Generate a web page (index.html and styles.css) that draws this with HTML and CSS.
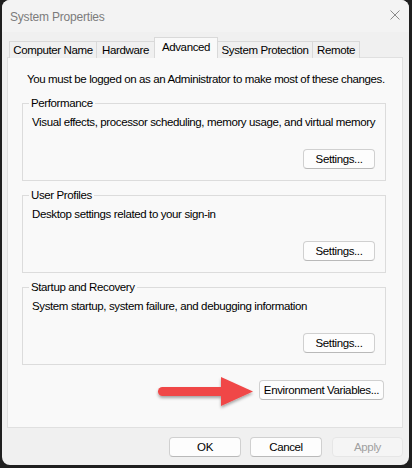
FILE: index.html
```html
<!DOCTYPE html>
<html lang="en">
<head>
  <meta charset="UTF-8">
  <meta name="viewport" content="width=device-width, initial-scale=1.0">
  <title>System Properties</title>
  <link rel="stylesheet" href="styles.css">
</head>
<body>
  <div class="window">
    <div class="titlebar">
      <span class="title">System Properties</span>
      <svg class="close" width="10" height="10" viewBox="0 0 10 10">
        <path d="M0.5 0.5 L9.5 9.5 M9.5 0.5 L0.5 9.5" stroke="#8a8a8a" stroke-width="1" fill="none"/>
      </svg>
    </div>

    <div class="content">
      <div class="tabs">
        <div class="tab tab-name">Computer Name</div>
        <div class="tab tab-hw">Hardware</div>
        <div class="tab tab-adv active">Advanced</div>
        <div class="tab tab-prot">System Protection</div>
        <div class="tab tab-remote">Remote</div>
      </div>

      <div class="panel">
        <p class="note">You must be logged on as an Administrator to make most of these changes.</p>

        <fieldset class="group">
          <legend>Performance</legend>
          <p>Visual effects, processor scheduling, memory usage, and virtual memory</p>
          <div class="group-actions"><button class="btn">Settings...</button></div>
        </fieldset>

        <fieldset class="group">
          <legend>User Profiles</legend>
          <p>Desktop settings related to your sign-in</p>
          <div class="group-actions"><button class="btn">Settings...</button></div>
        </fieldset>

        <fieldset class="group">
          <legend>Startup and Recovery</legend>
          <p>System startup, system failure, and debugging information</p>
          <div class="group-actions"><button class="btn">Settings...</button></div>
        </fieldset>

        <div class="env-row">
          <button class="btn btn-env">Environment Variables...</button>
        </div>

        <!-- callout arrow pointing at the env button -->
        <svg class="callout" width="110" height="40" viewBox="0 0 110 40">
          <defs>
            <filter id="shadow" x="-20%" y="-40%" width="140%" height="180%">
              <feDropShadow dx="0" dy="2" stdDeviation="1.5" flood-color="#000" flood-opacity="0.35"/>
            </filter>
          </defs>
          <g filter="url(#shadow)" fill="#f04646">
            <path d="M12.5 14 L73 14 L73 23 L12.5 23 A4.5 4.5 0 0 1 12.5 14 Z"/>
            <path d="M71 4 L103 18.5 L71 33 Z"/>
          </g>
        </svg>
      </div>

      <div class="dialog-buttons">
        <button class="btn">OK</button>
        <button class="btn">Cancel</button>
        <button class="btn" disabled>Apply</button>
      </div>
    </div>
  </div>
</body>
</html>
```

FILE: styles.css
```css
/* Dialog on a dark desktop */
body {
  margin: 0;
  background: #1f1f1f;
  font-family: 'Liberation Sans', Arial, sans-serif;
  font-size: 11.5px;
  letter-spacing: -0.38px;
  color: #000;
}

.window {
  width: 407px;
  height: 465px;
  margin-left: 2px;
  background: #f0f0f0;
  border-radius: 8px;
  overflow: hidden;
  display: flex;
  flex-direction: column;
}

/* Title bar */
.titlebar {
  height: 32px;
  flex: none;
  display: flex;
  align-items: center;
  justify-content: space-between;
  padding: 0 9px 0 8px;
  background: #f3f3f3;
}

.title {
  color: #7c7c7c;
  font-size: 12px;
  letter-spacing: -0.2px;
  margin-top: 1px;
}

.close {
  margin-top: -2px;
}

.content {
  padding: 6px 6px 0 5px;
}

/* Tab strip */
.tabs {
  display: flex;
  align-items: flex-end;
  padding-left: 2px;
  height: 20px;
  position: relative;
  z-index: 1;
  margin-bottom: -1px;
}

.tab {
  height: 17px;
  line-height: 17px;
  text-align: center;
  border: 1px solid #d9d9d9;
  border-bottom: none;
  border-left: none;
  background: #f0f0f0;
  box-sizing: border-box;
  white-space: nowrap;
}

.tab-name {
  width: 88px;
  border-left: 1px solid #d9d9d9;
}
.tab-hw { width: 58px; }
.tab-adv { width: 64px; }
.tab-prot { width: 95px; }
.tab-remote { width: 47px; }

.tab.active {
  height: 21px;
  line-height: 18px;
  background: #f9f9f9;
  border-left: 1px solid #d9d9d9;
  margin-left: -1px;
}

/* Tab page */
.panel {
  position: relative;
  background: #f9f9f9;
  border: 1px solid #e0e0e0;
  padding: 14px 16px 27px 14px;
}

.note {
  margin: 0 0 9px 5px;
  line-height: 15px;
  white-space: nowrap;
}

.group {
  margin: 0 0 7px 0;
  padding: 4px 10px 11px 9px;
  border: 1px solid #dcdcdc;
  border-radius: 0;
}

.group legend {
  padding: 0 2px;
  margin-left: -3px;
  line-height: 15px;
}

.group p {
  margin: 0;
  line-height: 15px;
  white-space: nowrap;
}

.group-actions {
  display: flex;
  justify-content: flex-end;
  margin-top: 19px;
}

.btn {
  font-family: inherit;
  font-size: 11.5px;
  letter-spacing: -0.38px;
  color: #000;
  height: 20px;
  width: 72px;
  padding: 0;
  background: #fdfdfd;
  border: 1px solid #d0d0d0;
  border-bottom-color: #b9b9b9;
  border-radius: 4px;
  white-space: nowrap;
}

.btn:disabled {
  color: #a0a0a0;
  background: #f5f5f5;
  border-color: #e6e6e6;
}

/* margin collapses with the last group's bottom margin */
.env-row {
  display: flex;
  justify-content: flex-end;
  margin-top: 15px;
  padding-right: 2px;
}

.btn-env {
  width: 125px;
}

.callout {
  position: absolute;
  left: 142px;
  top: 315px;
}

/* OK / Cancel / Apply */
.dialog-buttons {
  display: flex;
  justify-content: flex-end;
  gap: 9px;
  margin-top: 9px;
}

.dialog-buttons .btn:last-child {
  margin-left: 1px;
  width: 71px;
}
```
